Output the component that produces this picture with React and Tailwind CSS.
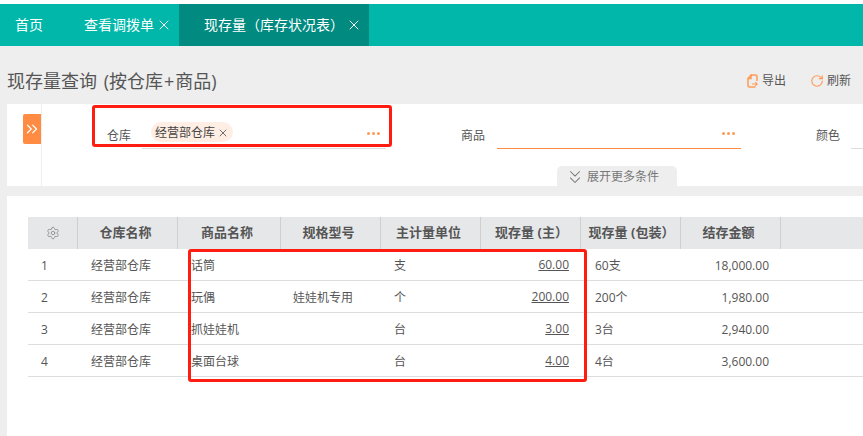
import React from "react";
import { ChevronsRight, ChevronsDown, X, RotateCw, Settings } from "lucide-react";

const font = { fontFamily: '"Open Sans", "Noto Sans CJK SC", sans-serif' };

const rows = [
  { no: 1, store: "经营部仓库", name: "话筒", spec: "", unit: "支", qty: "60.00", pack: "60支", amount: "18,000.00" },
  { no: 2, store: "经营部仓库", name: "玩偶", spec: "娃娃机专用", unit: "个", qty: "200.00", pack: "200个", amount: "1,980.00" },
  { no: 3, store: "经营部仓库", name: "抓娃娃机", spec: "", unit: "台", qty: "3.00", pack: "3台", amount: "2,940.00" },
  { no: 4, store: "经营部仓库", name: "桌面台球", spec: "", unit: "台", qty: "4.00", pack: "4台", amount: "3,600.00" },
];

const columns = [
  { title: "仓库名称", w: "w-[100px] pr-[4px]" },
  { title: "商品名称", w: "w-[103px] pr-[4px]" },
  { title: "规格型号", w: "w-[100px] pr-[4px]" },
  { title: "主计量单位", w: "w-[100px] pr-[4px]" },
  { title: "现存量 (主）", w: "w-[100px] pl-[2px]" },
  { title: "现存量 (包装）", w: "w-[100px] pl-[2px]" },
  { title: "结存金额", w: "w-[100px] pr-[4px]" },
];

const Dots = () => (
  <span className="flex gap-[2px]">
    <i className="w-[3px] h-[3px] rounded-full bg-[#ff9a56]" />
    <i className="w-[3px] h-[3px] rounded-full bg-[#ff9a56]" />
    <i className="w-[3px] h-[3px] rounded-full bg-[#ff9a56]" />
  </span>
);

const ExportIcon = () => (
  <svg width="11" height="14" viewBox="0 0 11 14" fill="none" stroke="#ff9a56" strokeWidth="1.5">
    <path d="M4 1h4.5a1.5 1.5 0 0 1 1.5 1.5V7M1 4.5v7A1.5 1.5 0 0 0 2.500 13H8.500M1 4.500L4 1v3.500z" />
    <path d="M5 10h5M8.300 8.200L10.300 10l-2 1.800" strokeWidth="1.100" />
  </svg>
);

const App = () => {
  return (
    <div className="relative w-[863px] h-[436px] overflow-hidden bg-[#eeeeee] text-[#555]" style={font}>
      <div className="h-1 bg-white" />

      {/* tabs */}
      <div className="h-[42px] bg-[#00b7aa] flex text-white text-sm">
        <div className="w-[84px] pl-[15px] flex items-center">首页</div>
        <div className="w-[95px] flex items-center gap-[2px]">
          查看调拨单
          <X size={16} strokeWidth={1.5} />
        </div>
        <div className="w-[190px] bg-[#008a80] pl-[25px] flex items-center gap-[2px] whitespace-nowrap">
          现存量（库存状况表）
          <X size={16} strokeWidth={1.5} />
        </div>
      </div>

      {/* title row */}
      <div className="h-[58px] pl-[7px] pr-[12px] flex items-center justify-between">
        <h1 className="text-[18px] text-[#555] pt-[12px] [word-spacing:2px]">
          现存量查询 (按仓库<span className="px-[1px]">+</span>商品)
        </h1>
        <div className="flex items-center gap-[24px] text-xs pt-[12px]">
          <span className="flex items-center gap-[4px]"><ExportIcon />导出</span>
          <span className="flex items-center gap-[3px]">
            <RotateCw size={14} color="#ff9a56" strokeWidth={2} />
            刷新
          </span>
        </div>
      </div>

      {/* filter panel */}
      <div className="relative ml-[7px] h-[82px] bg-white flex text-xs">
        <div className="w-[35px] shrink-0 border-r border-[#eeeeee] pt-[10px] flex justify-end">
          <div className="w-[18px] h-[30px] bg-[#ff8c42] rounded-l-[2px] flex items-center justify-center">
            <ChevronsRight size={24} color="#fff" strokeWidth={1.6} />
          </div>
        </div>
        <div className="w-[100px] pl-[65px] pt-[24px] shrink-0 whitespace-nowrap">仓库</div>
        <div className="w-[244px] h-[45px] shrink-0 border-b border-[#dddddd] flex items-end pb-[6px] justify-between pr-[6px]">
          <span className="h-5 ml-[9px] px-1 pt-[1px] rounded-full bg-[#ffeee3] flex items-center gap-[2px] text-[#444] text-xs">
            经营部仓库
            <X size={12} strokeWidth={1.5} />
          </span>
          <span className="pb-[7px]"><Dots /></span>
        </div>
        <div className="w-[111px] pl-[75px] pt-[24px] shrink-0 whitespace-nowrap">商品</div>
        <div className="w-[244px] h-[45px] shrink-0 border-b border-[#ff8c42] flex items-end justify-end pb-[13px] pr-[6px]">
          <Dots />
        </div>
        <div className="pl-[75px] pt-[24px] shrink-0 whitespace-nowrap">颜色</div>
        <div className="w-[20px] h-[45px] ml-[11px] shrink-0 border-b border-[#dddddd]" />
        <div className="absolute left-[550px] bottom-0 w-[120px] h-[20px] pt-[2px] pl-[7px] bg-[#eeeeee] rounded-t-[5px] flex items-center gap-[1px] text-[#777]">
          <ChevronsDown size={22} strokeWidth={1.1} />
          展开更多条件
        </div>
      </div>

      {/* table panel */}
      <div className="ml-[7px] mt-[10px] h-[240px] bg-white pt-[21px] pl-[21px]">
        <div className="flex h-[32px] bg-[#e6e7e9] text-[13px] font-bold text-[#555]">
          <div className="w-[50px] border-r border-[#cfcfcf] flex items-center justify-center">
            <Settings size={14} color="#888" strokeWidth={1.4} />
          </div>
          {columns.map((c) => (
            <div key={c.title} className={`${c.w} border-r border-[#cfcfcf] flex items-center justify-center whitespace-nowrap`}>
              {c.title}
            </div>
          ))}
          <div className="flex-1" />
        </div>
        {rows.map((r) => (
          <div key={r.no} className="flex h-[32px] text-xs border-b border-[#dddddd]">
            <div className="w-[50px] pl-[13px] pt-[3px] flex items-center">{r.no}</div>
            <div className="w-[100px] pl-[13px] pt-[3px] flex items-center">{r.store}</div>
            <div className="w-[103px] pl-[13px] pt-[3px] flex items-center">{r.name}</div>
            <div className="w-[100px] pl-[12px] pt-[3px] flex items-center">{r.spec}</div>
            <div className="w-[100px] pl-[13px] pt-[3px] flex items-center">{r.unit}</div>
            <div className="w-[100px] pr-[12px] flex items-center justify-end underline">{r.qty}</div>
            <div className="w-[100px] pl-[14px] pt-[3px] flex items-center">{r.pack}</div>
            <div className="w-[100px] pr-[12px] pt-[3px] flex items-center justify-end">{r.amount}</div>
            <div className="flex-1" />
          </div>
        ))}
      </div>

      {/* red annotation boxes */}
      <div className="absolute left-[92px] top-[105px] w-[300px] h-[42px] border-[3px] border-[#ff1d12] rounded-[3px]" />
      <div className="absolute left-[188px] top-[249px] w-[399px] h-[133px] border-[3px] border-[#ff1d12] rounded-[3px]" />
    </div>
  );
};

export default App;
